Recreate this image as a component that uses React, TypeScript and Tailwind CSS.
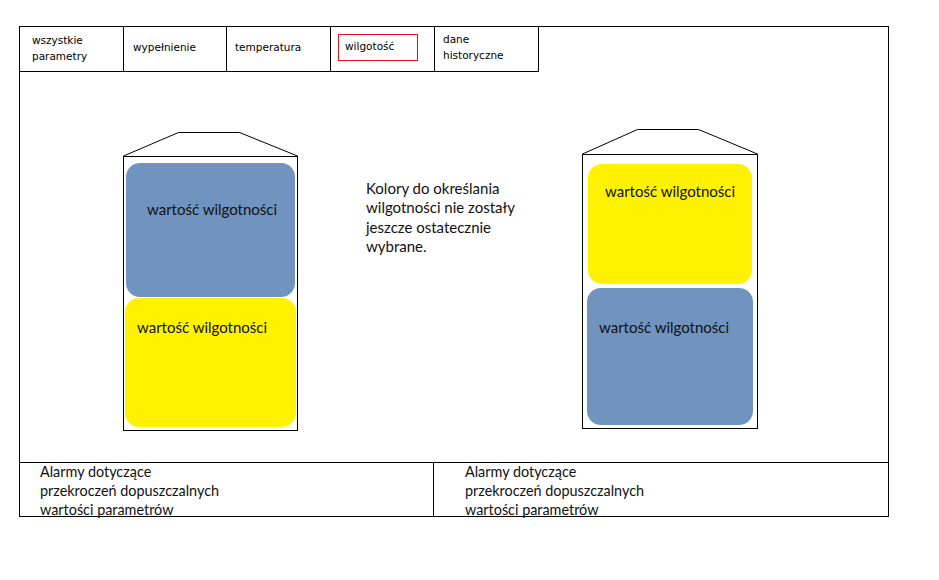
const tabFont = { fontFamily: '"DejaVu Sans", Tahoma, sans-serif' };
const bodyFont = { fontFamily: 'Lato, "Open Sans", sans-serif' };

function Roof({ w, h }: { w: number; h: number }) {
  return (
    <svg width={w} height={h} className="block">
      <polyline
        points={`0.5,${h} 55.5,0.5 116.5,0.5 ${w - 0.5},${h}`}
        fill="none"
        stroke="black"
        strokeWidth="1"
      />
    </svg>
  );
}

function Tile({ className, label }: { className: string; label: string }) {
  return (
    <div className={`rounded-[14px] ${className}`}>
      <p className="text-[15px] leading-[20px] text-[#111] whitespace-nowrap">{label}</p>
    </div>
  );
}

export default function App() {
  return (
    <div className="w-[939px] h-[580px] bg-white">
      <div className="ml-[19px] mt-[26px] w-[870px] h-[491px] border border-black flex flex-col">
        {/* tabs */}
        <div className="flex h-[45px] shrink-0" style={tabFont}>
          <div className="flex w-[519px] border-b border-black text-[10.5px] leading-[16px] text-black">
            <div className="w-[104px] border-r border-black pl-[12px] pt-[5px]">
              wszystkie
              <br />
              parametry
            </div>
            <div className="w-[103px] border-r border-black pl-[9px] pt-[12px]">wypełnienie</div>
            <div className="w-[104px] border-r border-black pl-[8px] pt-[12px]">temperatura</div>
            <div className="w-[104px] border-r border-black pl-[7px] pt-[7px]">
              <div className="w-[80px] h-[27px] border border-[#e0151b] pl-[6px] pt-[3px]">wilgotość</div>
            </div>
            <div className="w-[104px] border-r border-black pl-[8px] pt-[4px]">
              dane
              <br />
              historyczne
            </div>
          </div>
        </div>

        {/* main area */}
        <div className="flex items-start h-[390px] shrink-0" style={bodyFont}>
          <div className="ml-[103px] mt-[60px] w-[175px]">
            <Roof w={175} h={24} />
            <div className="h-[275px] border border-black pt-[6px]">
              <Tile className="ml-[2px] w-[169px] h-[134px] bg-[#7093bf] pl-[21px] pt-[36px]" label="wartość wilgotności" />
              <Tile className="ml-[1px] mt-[1px] w-[171px] h-[129px] bg-[#fff200] pl-[12px] pt-[19px]" label="wartość wilgotności" />
            </div>
          </div>

          <p className="ml-[68px] mt-[107px] w-[216px] text-[15px] leading-[19.4px] text-[#111]">
            Kolory do określania
            <br />
            wilgotności nie zostały
            <br />
            jeszcze ostatecznie
            <br />
            wybrane.
          </p>

          <div className="mt-[57px] w-[176px]">
            <Roof w={176} h={25} />
            <div className="h-[275px] border border-black pt-[9px]">
              <Tile className="ml-[5px] w-[164px] h-[120px] bg-[#fff200] pl-[17px] pt-[17px]" label="wartość wilgotności" />
              <Tile className="ml-[4px] mt-[4px] w-[166px] h-[137px] bg-[#7093bf] pl-[12px] pt-[29px]" label="wartość wilgotności" />
            </div>
          </div>
        </div>

        {/* alarms */}
        <div className="flex h-[54px] border-t border-black shrink-0 text-[14.4px] leading-[19px] text-[#111]" style={bodyFont}>
          <div className="w-[414px] border-r border-black pl-[20px] -mt-[1px]">
            Alarmy dotyczące
            <br />
            przekroczeń dopuszczalnych
            <br />
            wartości parametrów
          </div>
          <div className="flex-1 pl-[31px] -mt-[1px]">
            Alarmy dotyczące
            <br />
            przekroczeń dopuszczalnych
            <br />
            wartości parametrów
          </div>
        </div>
      </div>
    </div>
  );
}
